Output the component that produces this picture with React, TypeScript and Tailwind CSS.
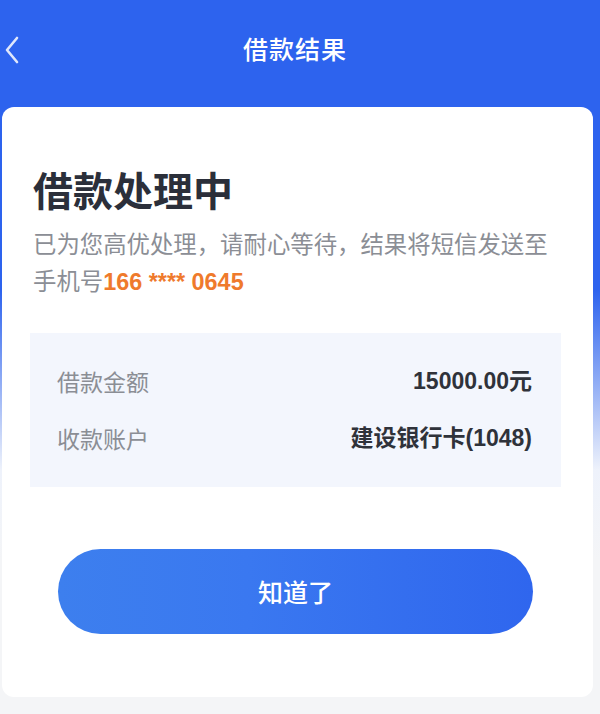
import React from "react";

export default function App() {
  return (
    <div className="w-[600px] h-[714px] overflow-hidden font-['Liberation_Sans','Noto_Sans_CJK_SC',sans-serif] bg-[linear-gradient(180deg,#2d63ee_0px,#2d63ee_290px,#eef2fb_470px,#f4f5f7_560px)]">
      {/* Header */}
      <div className="relative h-[107px] flex items-center justify-center pr-[10px] pb-[10px]">
        <svg
          className="absolute left-[4px] top-[36px]"
          width="16"
          height="28"
          viewBox="0 0 16 28"
          fill="none"
        >
          <path
            d="M13 2 L3 14 L13 26"
            stroke="#dfe7fb"
            strokeWidth="2.6"
            strokeLinecap="round"
            strokeLinejoin="round"
          />
        </svg>
        <span className="text-white text-[25px] font-medium tracking-[1px] font-['Noto_Sans_CJK_SC',sans-serif]">
          借款结果
        </span>
      </div>

      {/* Card */}
      <div className="ml-[2px] w-[591px] h-[590px] bg-white rounded-[12px] pt-[58px]">
        <div className="pl-[31px]">
          <h1 className="text-[40px] leading-[48px] font-bold text-[#2b2f3a] font-['Noto_Sans_CJK_SC',sans-serif]">
            借款处理中
          </h1>
          <p className="mt-[12px] text-[23.4px] leading-[37px] text-[#8b8e95] w-[560px] whitespace-nowrap font-['Noto_Sans_CJK_SC',sans-serif]">
            已为您高优处理，请耐心等待，结果将短信发送至
            <br />
            手机号
            <span className="font-bold text-[#ef7a2c] font-['Liberation_Sans',sans-serif]">
              166 **** 0645
            </span>
          </p>
        </div>

        <div className="ml-[28px] mt-[32px] w-[531px] h-[154px] bg-[#f3f6fd] pl-[27px] pr-[29px] pt-[33px] flex flex-col gap-[27px]">
          <div className="flex items-center justify-between h-[30px]">
            <span className="text-[23px] text-[#8b8e95] font-['Noto_Sans_CJK_SC',sans-serif]">
              借款金额
            </span>
            <span className="text-[23px] font-bold text-[#2f323a]">
              15000.00元
            </span>
          </div>
          <div className="flex items-center justify-between h-[30px]">
            <span className="text-[23px] text-[#8b8e95] font-['Noto_Sans_CJK_SC',sans-serif]">
              收款账户
            </span>
            <span className="text-[23px] font-bold text-[#2f323a]">
              建设银行卡(1048)
            </span>
          </div>
        </div>

        <button className="ml-[56px] mt-[62px] w-[475px] h-[85px] rounded-full bg-[linear-gradient(90deg,#3d7fee,#3a78f0_40%,#2f66ee)] flex items-center justify-center">
          <span className="text-white text-[25px] font-medium font-['Noto_Sans_CJK_SC',sans-serif]">
            知道了
          </span>
        </button>
      </div>
    </div>
  );
}
